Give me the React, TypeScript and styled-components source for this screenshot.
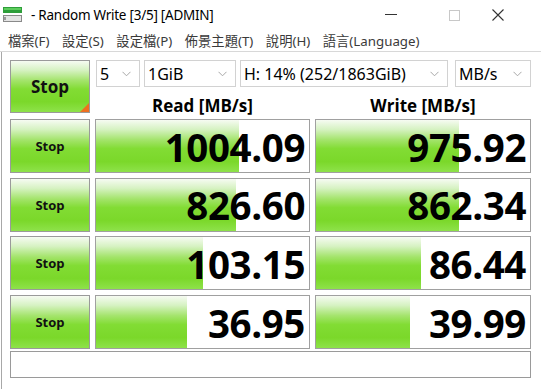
import React from "react";
import styled, { createGlobalStyle } from "styled-components";

const Global = createGlobalStyle`
  html, body { margin: 0; padding: 0; background: #ffffff; overflow: hidden; }
  body { width: 541px; height: 389px; font-family: "Open Sans", "Noto Sans", "Noto Sans CJK TC", sans-serif; }
`;

const Window = styled.div`
  width: 541px;
  height: 389px;
  background: #ffffff;
  display: flex;
  flex-direction: column;
`;

const TitleBar = styled.div`
  height: 30px;
  display: flex;
  align-items: center;
  padding-left: 3px;
  padding-right: 33px;
`;

const TitleText = styled.span`
  margin-left: 8px;
  font-family: "Noto Sans", sans-serif;
  font-size: 13.5px;
  color: #000;
  flex: 1;
  letter-spacing: -0.25px;
`;

const WinButton = styled.div<{ $mr: number }>`
  width: 20px;
  height: 30px;
  margin-right: ${(p) => p.$mr}px;
  display: flex;
  align-items: center;
  justify-content: center;
`;

const MenuBar = styled.div`
  height: 21px;
  display: flex;
  align-items: center;
  padding-left: 8px;
  gap: 12.5px;
  border-bottom: 1px solid #d8d8d8;
`;

const MenuItem = styled.span`
  font-family: "Noto Sans", "Noto Sans CJK TC", sans-serif;
  font-size: 13.3px;
  color: #3a3a3a;
  white-space: nowrap;
`;

const Body = styled.div`
  flex: 1;
  margin-left: 1px;
  border-left: 1px solid #a8a8a8;
  padding: 8px 0 0 8px;
  display: grid;
  grid-template-columns: 80px 215px 216px;
  grid-template-rows: 27px 32px repeat(4, 54px) 26px;
  column-gap: 5px;
  row-gap: 0;
  align-content: start;
`;

const greenGrad = `linear-gradient(to bottom, #f6fbf2 0%, #d6f2c2 18%, #a4e46c 38%, #82dc34 55%, #7bd82a 80%, #8ee24a 100%)`;

const MainStop = styled.div`
  grid-column: 1;
  grid-row: 1 / span 2;
  height: 53px;
  border: 1px solid #9a9a9a;
  box-sizing: border-box;
  background: ${greenGrad};
  display: flex;
  align-items: center;
  justify-content: center;
  font-family: "Open Sans", sans-serif;
  font-weight: 700;
  font-size: 17px;
  color: #111;
  position: relative;
  &::after {
    content: "";
    position: absolute;
    right: 0;
    bottom: 0;
    width: 0;
    height: 0;
    border-left: 9px solid transparent;
    border-bottom: 9px solid #ee7020;
  }
`;

const Controls = styled.div`
  grid-column: 2 / span 2;
  grid-row: 1;
  display: flex;
  gap: 4px;
  margin-left: 1px;
`;

const Select = styled.div<{ $w: number; $ml?: number }>`
  width: ${(p) => p.$w}px;
  margin-left: ${(p) => p.$ml ?? 0}px;
  height: 27px;
  box-sizing: border-box;
  border: 1px solid #d2d2d2;
  background: #fff;
  display: flex;
  align-items: center;
  padding: 0 8px 0 3px;
  font-family: "Noto Sans", sans-serif;
  font-size: 16px;
  color: #000;
  white-space: nowrap;
`;

const SelectText = styled.span`
  flex: 1;
  overflow: hidden;
`;

const Header = styled.div<{ $col: number }>`
  grid-column: ${(p) => p.$col};
  grid-row: 2;
  display: flex;
  align-items: center;
  justify-content: center;
  font-family: "Open Sans", sans-serif;
  font-weight: 700;
  font-size: 17px;
  color: #000;
  padding-top: 4px;
`;

const RowStop = styled.div<{ $row: number }>`
  grid-column: 1;
  grid-row: ${(p) => p.$row};
  height: 54px;
  margin-top: ${(p) => (p.$row - 3) * 4.7}px;
  box-sizing: border-box;
  border: 1px solid #9a9a9a;
  background: ${greenGrad};
  display: flex;
  align-items: center;
  justify-content: center;
  font-family: "Open Sans", sans-serif;
  font-weight: 700;
  font-size: 13px;
  color: #111;
`;

const ValueBox = styled.div<{ $row: number; $col: number }>`
  grid-column: ${(p) => p.$col};
  grid-row: ${(p) => p.$row};
  height: 54px;
  margin-top: ${(p) => (p.$row - 3) * 4.7}px;
  box-sizing: border-box;
  border: 1px solid #a0a0a0;
  background: #fff;
  position: relative;
  display: flex;
  align-items: center;
  justify-content: flex-end;
  padding-right: 4px;
  overflow: hidden;
`;

const Fill = styled.div`
  position: absolute;
  left: 0;
  top: 0;
  bottom: 0;
  background: ${greenGrad};
`;

const Value = styled.span`
  position: relative;
  font-family: "Open Sans", sans-serif;
  font-weight: 700;
  font-size: 38.5px;
  color: #000;
  letter-spacing: -0.4px;
  line-height: 1;
  padding-top: 2px;
`;

const Status = styled.div`
  grid-column: 1 / span 3;
  grid-row: 7;
  margin-top: 16px;
  height: 27px;
  box-sizing: border-box;
  border: 1px solid #9a9a9a;
  background: #fff;
`;

const Chevron = () => (
  <svg width="9" height="6" viewBox="0 0 9 6">
    <path d="M0.5 0.8 L4.5 4.8 L8.5 0.8" fill="none" stroke="#a8a8a8" strokeWidth="1" />
  </svg>
);

const AppIcon = () => (
  <svg width="20" height="16" viewBox="0 0 20 16">
    <rect x="0" y="0" width="19" height="6" fill="#2e9e3a" />
    <rect x="1" y="1" width="17" height="2" fill="#5ccc5c" />
    <rect x="0" y="8" width="19" height="7" fill="#8a8a8a" />
    <rect x="1" y="9" width="17" height="5" fill="#e4e4e4" />
    <rect x="1" y="10" width="2" height="3" fill="#9a9a9a" />
  </svg>
);

const rows = [
  { read: "1004.09", rw: 143, write: "975.92", ww: 143 },
  { read: "826.60", rw: 140, write: "862.34", ww: 143 },
  { read: "103.15", rw: 107, write: "86.44", ww: 105 },
  { read: "36.95", rw: 91, write: "39.99", ww: 94 },
];

export default function App() {
  return (
    <>
      <Global />
      <Window>
        <TitleBar>
          <AppIcon />
          <TitleText>- Random Write [3/5] [ADMIN]</TitleText>
          <WinButton $mr={43}>
            <svg width="12" height="2" viewBox="0 0 12 2">
              <rect x="0" y="0" width="12" height="1" fill="#333" />
            </svg>
          </WinButton>
          <WinButton $mr={24}>
            <svg width="11" height="11" viewBox="0 0 11 11">
              <rect x="0.5" y="0.5" width="10" height="10" fill="none" stroke="#c8c8c8" />
            </svg>
          </WinButton>
          <WinButton $mr={0}>
            <svg width="12" height="12" viewBox="0 0 12 12">
              <path d="M0.5 0.5 L11.5 11.5 M11.5 0.5 L0.5 11.5" stroke="#333" strokeWidth="1.1" />
            </svg>
          </WinButton>
        </TitleBar>
        <MenuBar>
          <MenuItem>檔案(F)</MenuItem>
          <MenuItem>設定(S)</MenuItem>
          <MenuItem>設定檔(P)</MenuItem>
          <MenuItem>佈景主題(T)</MenuItem>
          <MenuItem>說明(H)</MenuItem>
          <MenuItem>語言(Language)</MenuItem>
        </MenuBar>
        <Body>
          <MainStop>Stop</MainStop>
          <Controls>
            <Select $w={44}>
              <SelectText>5</SelectText>
              <Chevron />
            </Select>
            <Select $w={92}>
              <SelectText>1GiB</SelectText>
              <Chevron />
            </Select>
            <Select $w={208}>
              <SelectText>H: 14% (252/1863GiB)</SelectText>
              <Chevron />
            </Select>
            <Select $w={76} $ml={3}>
              <SelectText>MB/s</SelectText>
              <Chevron />
            </Select>
          </Controls>
          <Header $col={2}>Read [MB/s]</Header>
          <Header $col={3}>Write [MB/s]</Header>
          {rows.map((r, i) => (
            <React.Fragment key={i}>
              <RowStop $row={i + 3}>Stop</RowStop>
              <ValueBox $row={i + 3} $col={2}>
                <Fill style={{ width: r.rw }} />
                <Value>{r.read}</Value>
              </ValueBox>
              <ValueBox $row={i + 3} $col={3}>
                <Fill style={{ width: r.ww }} />
                <Value>{r.write}</Value>
              </ValueBox>
            </React.Fragment>
          ))}
          <Status />
        </Body>
      </Window>
    </>
  );
}
